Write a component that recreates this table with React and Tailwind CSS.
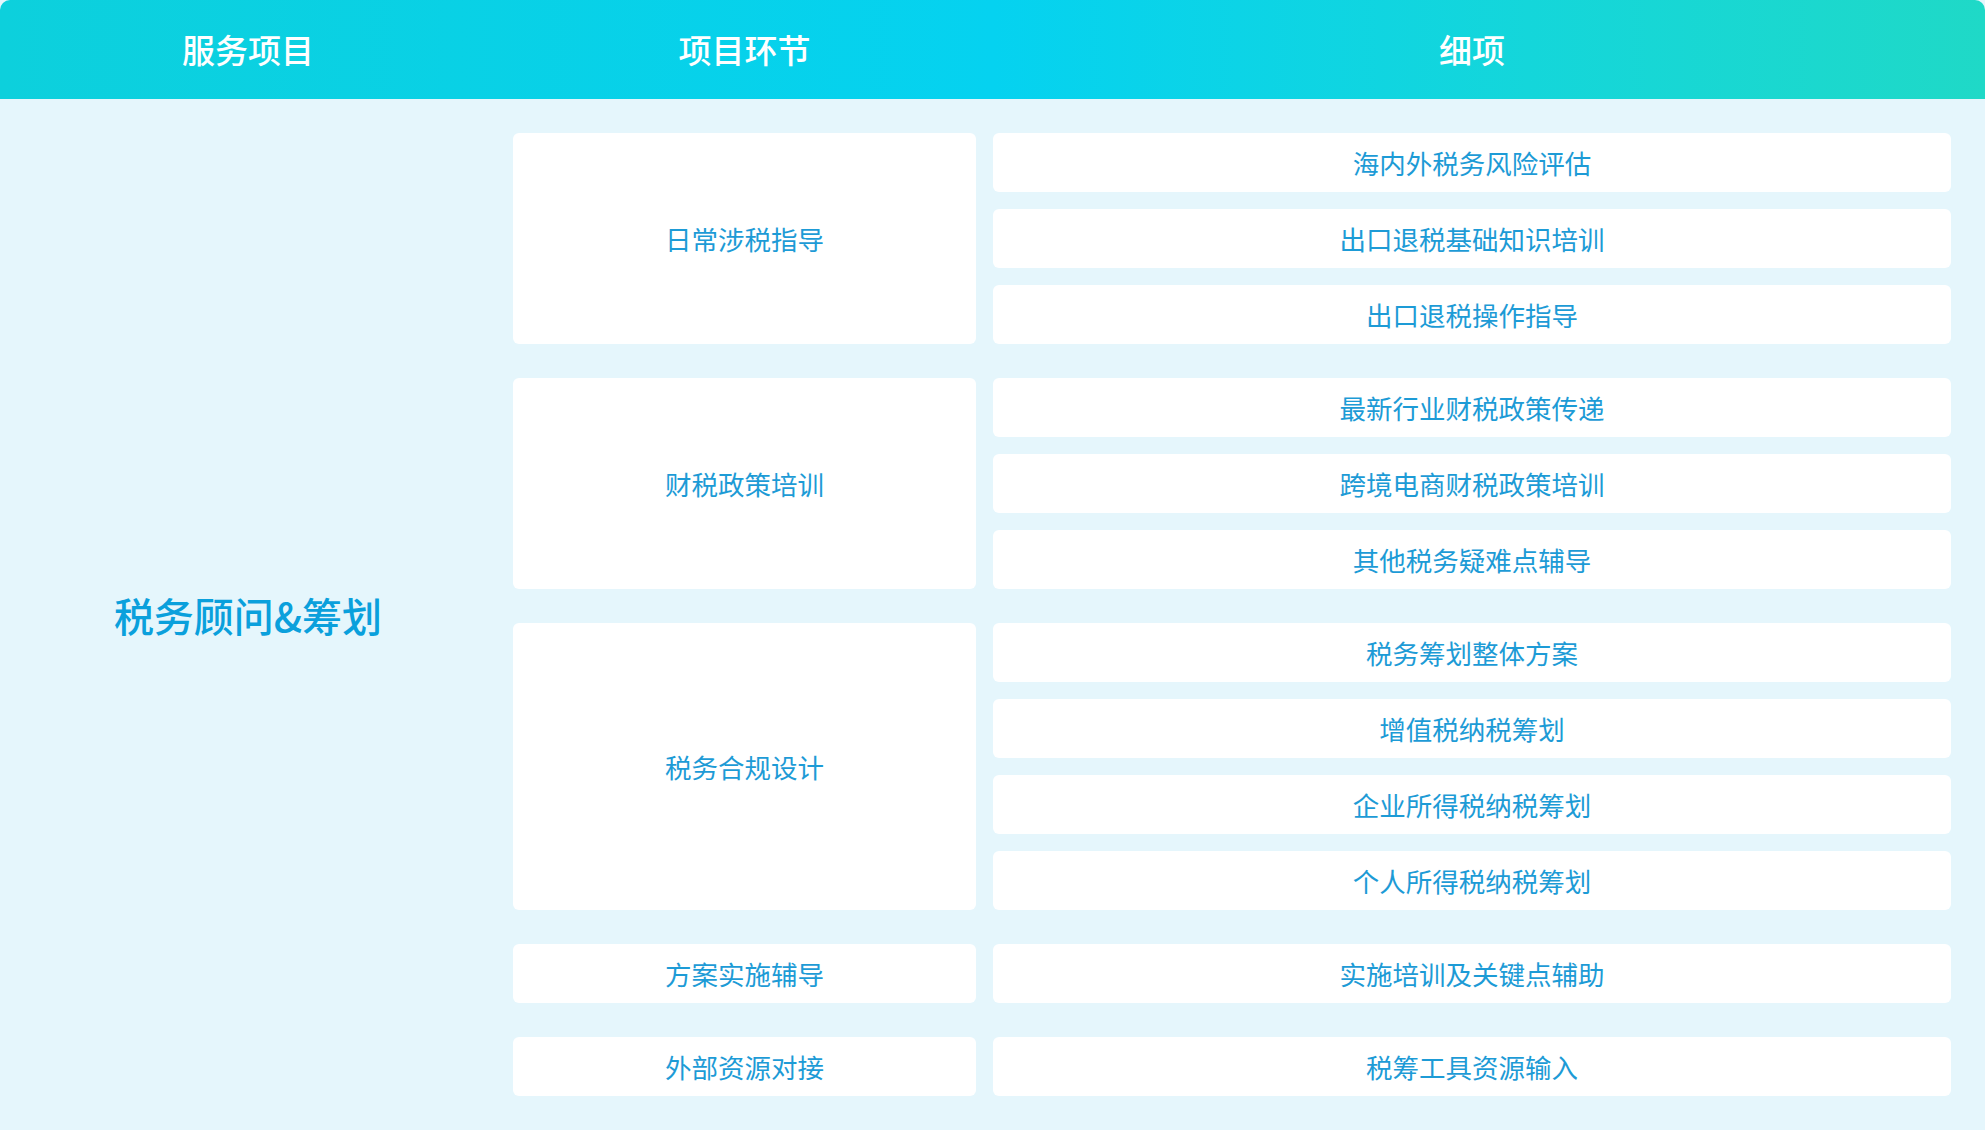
const groups = [
  {
    name: "日常涉税指导",
    items: ["海内外税务风险评估", "出口退税基础知识培训", "出口退税操作指导"],
  },
  {
    name: "财税政策培训",
    items: ["最新行业财税政策传递", "跨境电商财税政策培训", "其他税务疑难点辅导"],
  },
  {
    name: "税务合规设计",
    items: ["税务筹划整体方案", "增值税纳税筹划", "企业所得税纳税筹划", "个人所得税纳税筹划"],
  },
  { name: "方案实施辅导", items: ["实施培训及关键点辅助"] },
  { name: "外部资源对接", items: ["税筹工具资源输入"] },
];

const font = { fontFamily: '"Noto Sans CJK SC", "Noto Sans", sans-serif' };

export default function App() {
  return (
    <div className="w-[1985px] h-[1130px] bg-[#e5f6fc] flex flex-col" style={font}>
      <div className="h-[99px] shrink-0 rounded-t-[10px] bg-gradient-to-r from-[#0dd0dc] via-[#05d2f0] to-[#1fd9c7] flex items-center pr-[34px] text-white text-[33px] font-medium">
        <div className="w-[496px] text-center">服务项目</div>
        <div className="w-[463px] ml-[17px] text-center">项目环节</div>
        <div className="flex-1 ml-[17px] text-center">细项</div>
      </div>
      <div className="flex-1 flex pr-[34px] py-[34px]">
        <div className="w-[496px] flex items-center justify-center text-[40px] font-medium text-[#0aa0dc]">
          税务顾问&amp;筹划
        </div>
        <div className="flex-1 ml-[17px] flex flex-col gap-[34px]">
          {groups.map((g) => (
            <div key={g.name} className="flex gap-[17px]">
              <div className="w-[463px] bg-white rounded-[6px] flex items-center justify-center text-[26.5px] text-[#1d9bd6]">
                {g.name}
              </div>
              <div className="flex-1 flex flex-col gap-[17px]">
                {g.items.map((it) => (
                  <div
                    key={it}
                    className="h-[59px] bg-white rounded-[6px] flex items-center justify-center text-[26.5px] text-[#1d9bd6]"
                  >
                    {it}
                  </div>
                ))}
              </div>
            </div>
          ))}
        </div>
      </div>
    </div>
  );
}
